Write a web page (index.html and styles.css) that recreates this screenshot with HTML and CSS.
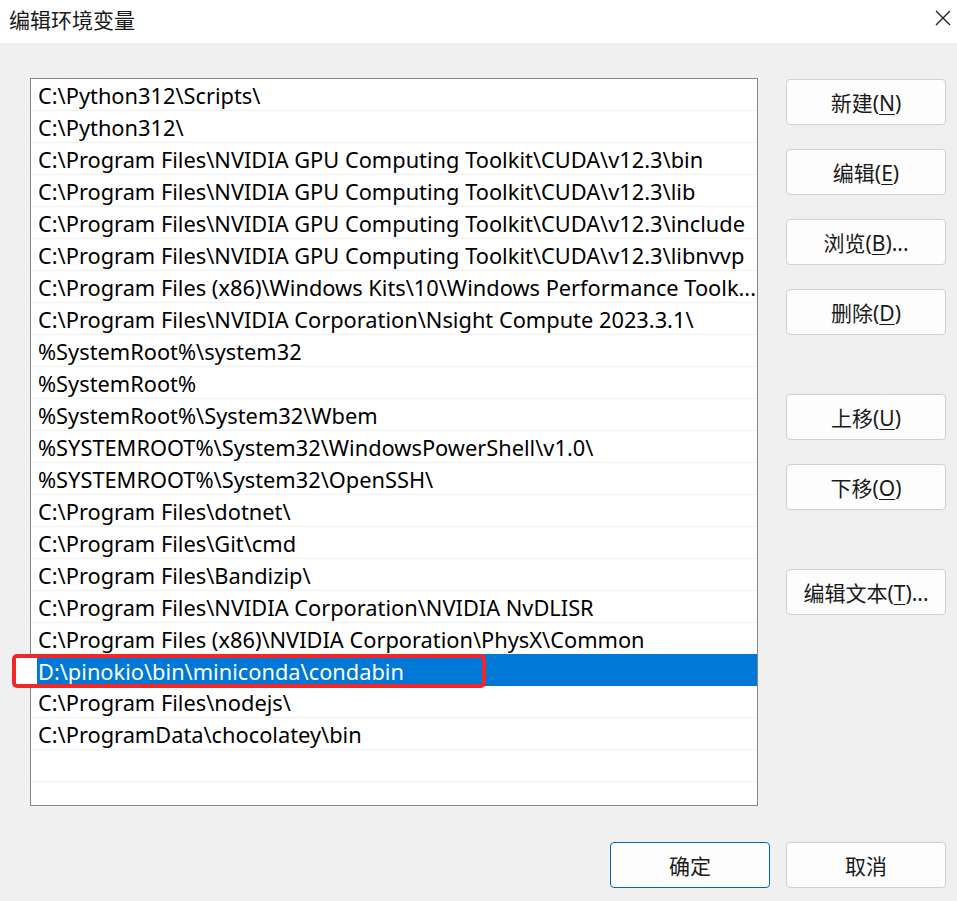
FILE: index.html
```html
<!DOCTYPE html>
<html lang="zh-CN">
<head>
<meta charset="utf-8">
<title>编辑环境变量</title>
<link rel="stylesheet" href="styles.css">
</head>
<body>
<div class="dialog">
  <div class="titlebar">
    <span class="title">编辑环境变量</span>
    <span class="close">
      <svg width="16" height="16" viewBox="0 0 16 16"><path d="M1 1 L15 15 M15 1 L1 15" stroke="#1a1a1a" stroke-width="1.3" fill="none"/></svg>
    </span>
  </div>
  <div class="content">
    <div class="main">
      <div class="list">
        <div class="row">C:\Python312\Scripts\</div>
        <div class="row">C:\Python312\</div>
        <div class="row">C:\Program Files\NVIDIA GPU Computing Toolkit\CUDA\v12.3\bin</div>
        <div class="row">C:\Program Files\NVIDIA GPU Computing Toolkit\CUDA\v12.3\lib</div>
        <div class="row">C:\Program Files\NVIDIA GPU Computing Toolkit\CUDA\v12.3\include</div>
        <div class="row">C:\Program Files\NVIDIA GPU Computing Toolkit\CUDA\v12.3\libnvvp</div>
        <div class="row">C:\Program Files (x86)\Windows Kits\10\Windows Performance Toolk...</div>
        <div class="row">C:\Program Files\NVIDIA Corporation\Nsight Compute 2023.3.1\</div>
        <div class="row">%SystemRoot%\system32</div>
        <div class="row">%SystemRoot%</div>
        <div class="row">%SystemRoot%\System32\Wbem</div>
        <div class="row">%SYSTEMROOT%\System32\WindowsPowerShell\v1.0\</div>
        <div class="row">%SYSTEMROOT%\System32\OpenSSH\</div>
        <div class="row">C:\Program Files\dotnet\</div>
        <div class="row">C:\Program Files\Git\cmd</div>
        <div class="row">C:\Program Files\Bandizip\</div>
        <div class="row">C:\Program Files\NVIDIA Corporation\NVIDIA NvDLISR</div>
        <div class="row">C:\Program Files (x86)\NVIDIA Corporation\PhysX\Common</div>
        <div class="row selected"><span class="sel-text">D:\pinokio\bin\miniconda\condabin</span><span class="mark"></span></div>
        <div class="row">C:\Program Files\nodejs\</div>
        <div class="row">C:\ProgramData\chocolatey\bin</div>
        <div class="row"></div>
        <div class="row"></div>
      </div>
      <div class="side">
        <div class="group">
          <button class="btn">新建(<u>N</u>)</button>
          <button class="btn">编辑(<u>E</u>)</button>
          <button class="btn">浏览(<u>B</u>)...</button>
          <button class="btn">删除(<u>D</u>)</button>
        </div>
        <div class="group">
          <button class="btn">上移(<u>U</u>)</button>
          <button class="btn">下移(<u>O</u>)</button>
        </div>
        <div class="group">
          <button class="btn">编辑文本(<u>T</u>)...</button>
        </div>
      </div>
    </div>
    <div class="footer">
      <button class="btn primary">确定</button>
      <button class="btn">取消</button>
    </div>
  </div>
</div>
</body>
</html>
```

FILE: styles.css
```css
html, body {
  margin: 0;
  padding: 0;
}
body {
  width: 957px;
  height: 901px;
  overflow: hidden;
  background: #f0f0f0;
  font-family: "Noto Sans", "Noto Sans CJK SC", sans-serif;
  color: #000;
}
.dialog {
  display: flex;
  flex-direction: column;
  height: 901px;
}
.titlebar {
  height: 43px;
  background: #ffffff;
  display: flex;
  align-items: center;
  justify-content: space-between;
  padding: 0 6px 0 9px;
  box-sizing: border-box;
}
.title {
  font-family: "Noto Sans CJK SC", sans-serif;
  font-size: 21px;
  color: #1a1a1a;
  margin-top: -6px;
}
.close {
  display: flex;
  width: 16px;
  height: 16px;
  margin-top: -7px;
}
.content {
  flex: 1;
  display: flex;
  flex-direction: column;
  padding: 35px 11px 0 30px;
}
.main {
  display: flex;
  gap: 28px;
}
.list {
  width: 728px;
  height: 728px;
  box-sizing: border-box;
  background: #ffffff;
  border: 1px solid #828790;
}
.row {
  position: relative;
  height: 32px;
  box-sizing: border-box;
  border-bottom: 1px solid #f0f0f0;
  padding-left: 7px;
  font-size: 21.8px;
  line-height: 33px;
  white-space: nowrap;
  overflow: hidden;
}
.row.selected {
  padding-left: 6px;
  border-bottom-color: #0078d7;
  overflow: visible;
}
.sel-text {
  display: block;
  background: #0078d7;
  color: #ffffff;
  padding-left: 1px;
  height: 32px;
  margin-top: -1px;
  line-height: 35px;
  overflow: hidden;
}
.mark {
  position: absolute;
  left: -19px;
  top: 0;
  width: 466px;
  height: 26px;
  border: 4px solid #f02828;
  border-radius: 5px;
  background: linear-gradient(to right, #ffffff 0 21px, transparent 21px);
}
.side {
  width: 160px;
  display: flex;
  flex-direction: column;
  gap: 59px;
  padding-top: 1px;
}
.group {
  display: flex;
  flex-direction: column;
  gap: 24px;
}
.btn {
  width: 160px;
  height: 46px;
  box-sizing: border-box;
  background: #fdfdfd;
  border: 1px solid #d0d0d0;
  border-radius: 4px;
  font-family: "Noto Sans", "Noto Sans CJK SC", sans-serif;
  font-size: 21px;
  color: #1a1a1a;
  padding: 0;
  text-align: center;
}
.btn u {
  text-decoration-thickness: 1px;
  text-underline-offset: 3px;
}
.btn.primary {
  border-color: #0067c0;
}
.footer {
  display: flex;
  justify-content: flex-end;
  gap: 16px;
  margin-top: 36px;
}
```
